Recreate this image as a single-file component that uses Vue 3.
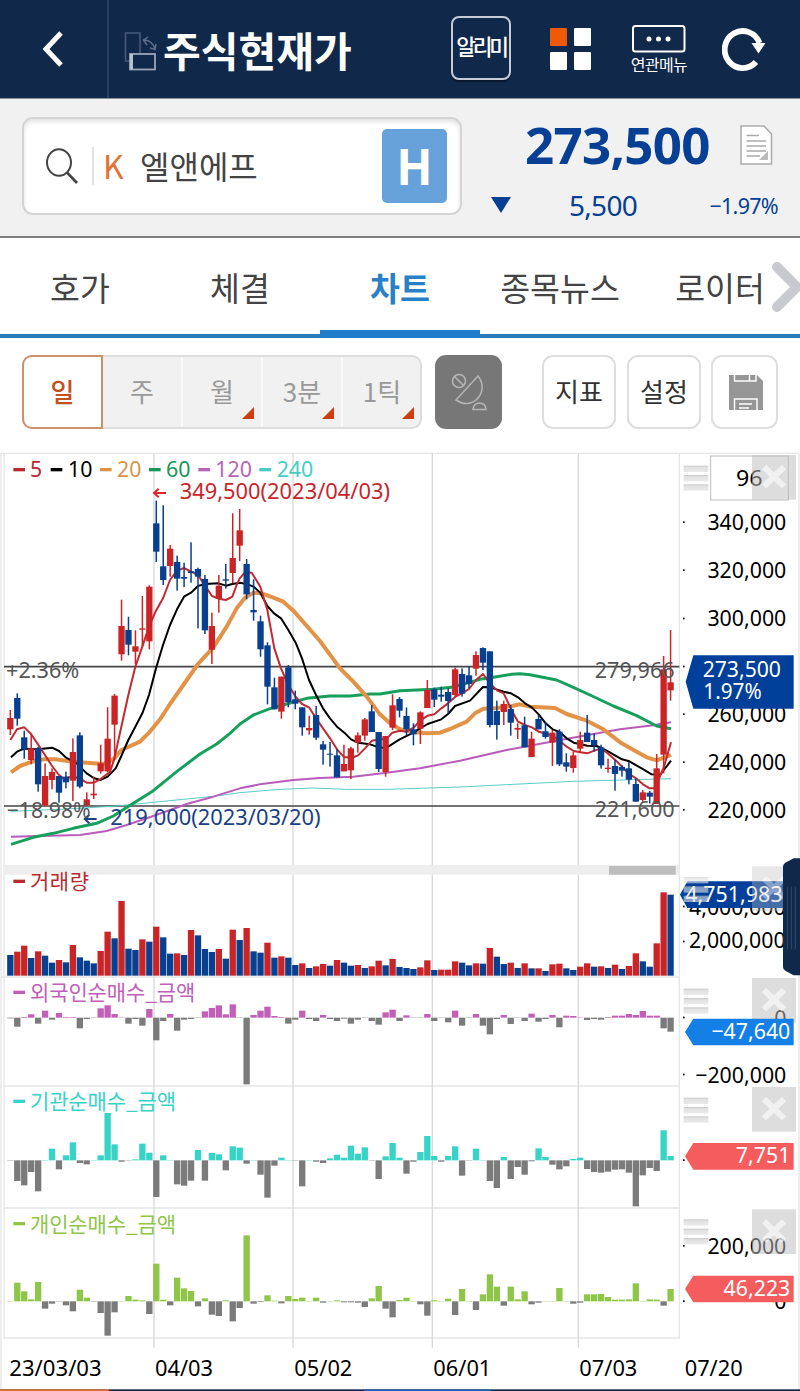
<template>
  <div class="app">
    <header class="top-bar">
      <button class="back">
        <svg width="24" height="38" viewBox="0 0 24 38"><path d="M20 3 L5 19 L20 35" fill="none" stroke="#fff" stroke-width="5" /></svg>
      </button>
      <svg class="rotate-icon" width="34" height="42" viewBox="0 0 34 42" fill="none">
        <path d="M5 30 H1.5 V2 H16 V22" stroke="#46597a" stroke-width="1.6" />
        <path d="M20 9 C25 9 29 12 31 18 M24 6 L19.500 9 L23 14 M32 13 L31 18.500 L26 17" stroke="#5d6d8a" stroke-width="1.5" />
        <rect x="6" y="23" width="25" height="15.500" stroke="#9aa6ba" stroke-width="1.800" />
        <path d="M7.500 23 V38.500" stroke="#b8c0ce" stroke-width="3" />
      </svg>
      <h1>주식현재가</h1>
      <button class="notice">알리미</button>
      <div class="tiles"><i class="on"></i><i></i><i></i><i></i></div>
      <div class="related">
        <svg width="54" height="28" viewBox="0 0 54 28">
          <rect x="1" y="1" width="51.500" height="25.500" rx="2.500" fill="none" stroke="#fff" stroke-width="2" />
          <circle cx="17" cy="14" r="2.500" fill="#fff" /><circle cx="26.500" cy="14" r="2.500" fill="#fff" /><circle cx="36" cy="14" r="2.500" fill="#fff" />
        </svg>
        <span>연관메뉴</span>
      </div>
      <svg class="refresh" width="44" height="46" viewBox="0 0 44 46">
        <path d="M34 36 A18 18.500 0 1 1 37.500 17" fill="none" stroke="#fff" stroke-width="5.800" />
        <path d="M29.500 17 L43.500 17 L36.500 27.500 Z" fill="#fff" />
      </svg>
    </header>

    <section class="quote">
      <div class="search">
        <svg class="glass" width="34" height="38" viewBox="0 0 34 38" fill="none" stroke="#444">
          <ellipse cx="14" cy="15.500" rx="12" ry="13.300" stroke-width="2" />
          <path d="M22 25.500 L32 36" stroke-width="2.600" />
        </svg>
        <span class="market">K</span>
        <span class="name">엘앤에프</span>
        <span class="h-badge">H</span>
      </div>
      <div class="price-box">
        <div class="price-row">
          <strong>273,500</strong>
          <svg width="33" height="41" viewBox="0 0 33 41">
            <path d="M1 1 H24 L31.500 9 V39 H1 Z" fill="#fff" stroke="#aaa" stroke-width="1.500" />
            <path d="M6.500 10.500 H19 M6.500 16 H26 M6.500 21 H26 M6.500 26 H26 M6.500 31 H20" stroke="#aaa" stroke-width="1.500" />
            <path d="M28 26 V35 H19 Z" fill="#bbb" />
          </svg>
        </div>
        <div class="diff-row">
          <svg width="20" height="16" viewBox="0 0 20 16"><path d="M0 0 H20 L10 16 Z" fill="#063f94" /></svg>
          <span class="diff">5,500</span>
          <span class="rate">−1.97%</span>
        </div>
      </div>
    </section>

    <nav class="tabs">
      <a v-for="tab in tabs" :key="tab" :class="{ active: tab === activeTab }">{{ tab }}</a>
      <svg class="more" width="30" height="52" viewBox="0 0 30 52"><path d="M6 6 L26 26 L6 46" fill="none" stroke="#c9cacf" stroke-width="10" stroke-linecap="round" stroke-linejoin="round" /></svg>
    </nav>

    <div class="toolbar">
      <div class="periods">
        <button v-for="p in periods" :key="p.label" :class="{ selected: p.selected }">
          {{ p.label }}
          <i v-if="p.more"></i>
        </button>
      </div>
      <button class="dish">
        <svg width="36" height="38" viewBox="0 0 36 38" fill="none" stroke="#b4b4b4" stroke-width="1.600">
          <circle cx="8" cy="8" r="6.500" /><path d="M3.500 3.500 L12.500 12.500" />
          <path d="M27 3 L5 27 C12 32 21 32 27 25 C33 18 32 9 27 3 Z" />
          <path d="M22 36.500 C22 28 35 28 35 36.500 Z" />
        </svg>
      </button>
      <button class="tool indicator">지표</button>
      <button class="tool config">설정</button>
      <button class="tool save">
        <svg width="34" height="35" viewBox="0 0 34 35">
          <path d="M0 0 H28 L34 6 V35 H0 Z" fill="#969696" />
          <path d="M5.500 0 V6 H27 V0 M20.500 0 V6 M5.500 35 V24 H28 V35 M10 29 H23 M10 33 H20" fill="none" stroke="#fff" stroke-width="1.400" />
        </svg>
      </button>
    </div>

    <main class="chart">
      <!-- price -->
      <svg class="pane" width="800" height="415" viewBox="0 0 2400 1245">
        <path class="frame" d="M3 1245 V10 H2397 V1245 M12 10 V1245 M2038 10 V1245" />
        <path class="grid" :d="gridPath(10, 1245)" />
        <g v-for="m in legend" :key="m.label" :fill="m.color">
          <rect :x="m.x" y="54" width="35" height="10" />
          <text :x="m.tx" y="80">{{ m.label }}</text>
        </g>
        <path class="level" d="M12 650 H2038 M12 1068 H2038" />
        <g class="ma">
          <polyline v-for="l in averages" :key="l.color" :points="l.points" :stroke="l.color" :stroke-width="l.width" />
        </g>
        <g v-for="(c, i) in candles" :key="i" :fill="c[0] ? RED : BLUE">
          <rect :x="barX(i) - 2.250" :y="c[1]" width="4.500" :height="c[4] - c[1]" />
          <rect :x="barX(i) - 9.500" :y="c[2]" width="19" :height="c[3] - c[2]" />
        </g>
        <g fill="#c9252b">
          <path d="M476 116 L462 129 L476 142 M462 129 H498" fill="none" stroke="#e0252b" stroke-width="6" />
          <text x="539" y="146" textLength="631" lengthAdjust="spacingAndGlyphs">349,500(2023/04/03)</text>
        </g>
        <g fill="#1a4088">
          <path d="M268 1094 L254 1107 L268 1120 M254 1107 H290" fill="none" stroke="#1a4088" stroke-width="6" />
          <text x="331" y="1124" textLength="631" lengthAdjust="spacingAndGlyphs">219,000(2023/03/20)</text>
        </g>
        <g fill="#555">
          <text x="18" y="684" textLength="220" lengthAdjust="spacingAndGlyphs">+2.36%</text>
          <text x="20" y="1103" textLength="252" lengthAdjust="spacingAndGlyphs">−18.98%</text>
          <text x="1784" y="684" textLength="240" lengthAdjust="spacingAndGlyphs">279,966</text>
          <text x="1784" y="1102" textLength="240" lengthAdjust="spacingAndGlyphs">221,600</text>
        </g>
        <g v-for="a in priceAxis" :key="a.y">
          <rect x="2049" :y="a.y - 3" width="5" height="5" />
          <text v-if="a.label" x="2359" :y="a.y + 23" text-anchor="end">{{ a.label }}</text>
        </g>
        <path d="M2057 695 L2080 616 H2381 V776 H2080 Z" fill="#00409a" />
        <text x="2108" y="680" fill="#fff" textLength="235" lengthAdjust="spacingAndGlyphs">273,500</text>
        <text x="2110" y="748" fill="#fff" textLength="175" lengthAdjust="spacingAndGlyphs">1.97%</text>
        <rect x="2132" y="18" width="233" height="132" fill="#fff" stroke="#bbb" stroke-width="3" />
        <text x="2208" y="109" textLength="80" lengthAdjust="spacingAndGlyphs">96</text>
        <use href="#grip" y="47" />
        <use href="#close" y="15" />
      </svg>

      <!-- volume -->
      <svg class="pane volume" width="800" height="112" viewBox="0 45 2400 336">
        <path class="frame" d="M3 45 V381 H2038 M12 45 V381 M2038 45 V381 M2397 45 V381" />
        <path class="grid" :d="gridPath(74, 381)" />
        <rect x="12" y="45" width="2026" height="29" fill="#eee" />
        <rect x="1827" y="48" width="200" height="26" fill="#bdbdbd" />
        <rect x="40" y="89" width="35" height="10" fill="#b92a2e" />
        <text class="ko" x="90" y="117" fill="#b92a2e" textLength="177">거래량</text>
        <rect v-for="(v, i) in volumes" :key="i" :x="barX(i) - 9.500" :y="Math.abs(v)" width="19" :height="377 - Math.abs(v)" :fill="v > 0 ? RED : BLUE" />
        <rect x="2049" y="167" width="5" height="5" /><rect x="2049" y="272" width="5" height="5" />
        <text x="2357" y="195" text-anchor="end" textLength="290" lengthAdjust="spacingAndGlyphs">4,000,000</text>
        <text x="2357" y="295" text-anchor="end" textLength="290" lengthAdjust="spacingAndGlyphs">2,000,000</text>
        <path d="M2040 134 L2062 94 H2381 V174 H2062 Z" fill="#00409a" />
        <text x="2056" y="157" fill="#fff" textLength="292" lengthAdjust="spacingAndGlyphs">4,751,983</text>
        <use href="#grip" y="81" opacity=".6" />
        <use href="#close" y="49" opacity=".7" />
        <path d="M2400 25 H2381 L2356 38 Q2349 42 2349 50 V350 Q2349 358 2356 362 L2381 376 H2400 Z" fill="#10284a" />
        <path d="M2362 110 V298 M2374 110 V298 M2386 110 V298" stroke="#34496a" stroke-width="3" />
      </svg>

      <!-- net buying, one pane for each investor group -->
      <svg v-for="p in flows" :key="p.title" class="pane" width="800" :height="p.height / 3" :viewBox="`0 ${p.top} 2400 ${p.height}`">
        <path class="frame" :d="`M3 ${p.top} v${p.height} M2397 ${p.top} v${p.height} M12 ${p.top} v${p.height} H2038 v${-p.height}`" />
        <path class="grid" :d="gridPath(p.top, p.top + p.height)" />
        <rect x="40" :y="p.titleY - 29" width="35" height="10" :fill="p.color" />
        <text class="ko" x="90" :y="p.titleY" :fill="p.color" :textLength="p.titleWidth">{{ p.title }}</text>
        <rect v-for="(v, i) in p.values" :key="i" :x="barX(i) - 9.500" :y="v > 0 ? p.base - v : p.base" width="19" :height="Math.abs(v)" :fill="v > 0 ? p.color : '#7b7b7b'" />
        <g v-for="a in p.axis" :key="a.y">
          <rect x="2049" :y="a.y - 3" width="5" height="5" />
          <text v-if="a.label" x="2359" :y="a.y + 24" text-anchor="end">{{ a.label }}</text>
        </g>
        <use href="#grip" :y="p.gripY" />
        <use href="#close" :y="p.closeY" />
        <path :d="`M2055 ${p.tagY + 40} l25 -40 H2381 v80 H2080 Z`" :fill="p.tagColor" />
        <text x="2371" :y="p.tagY + 61" fill="#fff" text-anchor="end">{{ p.tag }}</text>
      </svg>

      <!-- dates -->
      <svg class="pane" width="800" height="53" viewBox="0 744 2400 159">
        <path class="frame" d="M3 744 V900 M2397 744 V900" />
        <path class="grid" :d="gridPath(744, 773)" />
        <text v-for="d in dates" :key="d.x" :x="d.x" y="859" :textLength="d.width" lengthAdjust="spacingAndGlyphs">{{ d.label }}</text>
        <rect x="0" y="898" width="2400" height="5" fill="#10284a" />
        <rect x="0" y="898" width="327" height="5" fill="#e07038" />
        <rect x="1092" y="898" width="380" height="5" fill="#1f66b8" />
      </svg>

      <svg width="0" height="0" class="defs">
        <defs>
          <linearGradient id="bar" x1="0" y1="0" x2="0" y2="1">
            <stop offset="0" stop-color="#c8c8c8" /><stop offset=".3" stop-color="#e2e2e2" /><stop offset="1" stop-color="#e9e9e9" />
          </linearGradient>
          <g id="grip" fill="url(#bar)">
            <rect x="2051" width="74" height="19" /><rect x="2051" y="28" width="74" height="19" /><rect x="2051" y="56" width="74" height="19" />
          </g>
          <g id="close">
            <rect x="2256" width="132" height="134" fill="#bdbdbd" fill-opacity=".52" />
            <path d="M2292 36 L2352 94 M2352 36 L2292 94" stroke="#fff" stroke-opacity=".6" stroke-width="18" />
          </g>
        </defs>
      </svg>
    </main>
  </div>
</template>

<script setup>
import { ref } from 'vue'

const RED = '#cb2427'
const BLUE = '#083f8e'

const tabs = ['호가', '체결', '차트', '종목뉴스', '로이터']
const activeTab = ref('차트')

const periods = [
  { label: '일', selected: true },
  { label: '주' },
  { label: '월', more: true },
  { label: '3분', more: true },
  { label: '1틱', more: true },
]

// Panes are drawn on a canvas three units to the pixel
const barX = (i) => 31 + i * 20.85
const gridPath = (y1, y2) => [462, 879, 1297, 1735].map((x) => `M${x} ${y1} V${y2}`).join(' ')

const legend = [
  { label: '5', color: '#b92a2e', x: 40, tx: 90 },
  { label: '10', color: '#000', x: 152, tx: 204 },
  { label: '20', color: '#dd924a', x: 300, tx: 351 },
  { label: '60', color: '#14995a', x: 447, tx: 498 },
  { label: '120', color: '#b765b9', x: 595, tx: 646 },
  { label: '240', color: '#45cdc5', x: 778, tx: 830 },
]

const averages = [
  { color: '#5cccc9', width: 3, points: '33,1084 200,1077 350,1068 450,1058 560,1047 650,1038 720,1028 840,1018 940,1014 1040,1018 1160,1018 1380,1011 1520,1004 1720,994 2013,986' },
  { color: '#b85bbb', width: 6, points: '33,1160 150,1157 240,1155 320,1143 380,1125 460,1098 560,1062 640,1040 720,1015 780,1003 880,990 960,984 1060,980 1160,968 1260,955 1380,932 1520,900 1710,865 1860,838 1960,826 2013,817' },
  { color: '#17a05c', width: 9, points: '33,1183 100,1162 160,1150 220,1135 290,1120 340,1098 400,1060 460,1022 530,965 600,912 650,882 690,850 720,822 760,795 810,776 860,762 920,745 990,738 1050,738 1110,732 1140,732 1200,722 1300,718 1360,711 1440,688 1490,680 1535,673 1560,671 1590,674 1670,690 1720,712 1770,735 1840,768 1910,797 1970,828 2013,836' },
  { color: '#e39347', width: 12, points: '33,967 60,948 90,937 130,928 165,928 210,934 260,938 310,942 340,928 364,900 420,875 447,848 480,808 510,762 550,705 594,642 640,592 680,530 710,475 735,443 760,428 785,430 820,443 850,455 880,482 960,573 1020,655 1060,695 1100,740 1140,793 1170,820 1200,838 1240,846 1280,850 1320,848 1350,837 1400,815 1425,790 1450,776 1490,774 1535,768 1560,763 1590,770 1665,774 1700,792 1760,812 1810,838 1865,880 1910,905 1940,922 1970,931 2013,915' },
  { color: '#000', width: 6, points: '33,922 51,905 73,896 114,898 156,893 177,903 197,922 230,940 260,970 281,984 301,990 323,980 347,955 364,918 385,870 406,830 427,790 447,735 468,655 489,585 510,525 531,478 552,440 573,428 594,408 615,402 656,400 678,407 697,402 720,398 739,402 761,410 781,428 802,468 822,490 843,505 865,540 887,578 906,625 927,690 948,735 969,775 990,805 1011,830 1033,848 1053,868 1074,878 1110,883 1140,893 1160,893 1199,868 1240,848 1260,835 1283,822 1324,808 1344,792 1365,768 1410,752 1449,711 1470,712 1511,725 1533,730 1554,742 1575,760 1596,773 1616,793 1637,820 1658,838 1679,846 1700,865 1721,878 1762,887 1790,888 1820,902 1866,928 1888,934 1925,955 1955,973 1980,975 2013,932' },
  { color: '#c02b30', width: 6, points: '31,870 51,838 73,832 93,852 114,883 135,915 156,948 177,975 190,985 217,980 239,985 260,998 281,998 301,988 330,965 342,930 364,830 385,735 406,650 427,590 447,530 468,482 489,445 510,390 531,362 552,354 573,365 594,375 615,407 636,438 656,446 678,450 697,440 710,405 719,385 735,367 755,368 781,410 802,480 823,595 843,655 865,705 887,740 906,762 927,772 948,805 969,835 990,865 1011,898 1033,922 1060,922 1074,916 1095,895 1116,872 1140,868 1158,868 1177,848 1199,842 1220,845 1242,832 1260,812 1283,797 1303,793 1324,775 1344,760 1366,740 1386,730 1407,717 1428,690 1449,672 1470,700 1492,722 1511,730 1533,777 1554,815 1575,825 1596,832 1616,845 1637,850 1658,858 1679,872 1700,890 1721,903 1741,907 1762,910 1783,902 1804,895 1825,912 1846,930 1866,950 1888,972 1908,985 1929,1003 1949,1015 1965,1015 1992,950 2013,877' },
]

// [rising, high, body top, body bottom, low]
const candles = [
  [1, 780, 804, 838, 855], [0, 730, 744, 806, 827], [0, 842, 862, 898, 926], [1, 853, 895, 930, 943],
  [0, 890, 895, 1003, 1025], [1, 940, 978, 1066, 1068], [1, 955, 966, 990, 1018], [0, 978, 978, 1028, 1058],
  [0, 965, 980, 997, 1015], [1, 865, 906, 992, 1053], [0, 847, 856, 1010, 1015], [1, 1027, 1048, 1066, 1068],
  [1, 980, 1031, 1036, 1047], [1, 884, 940, 964, 971], [1, 772, 866, 964, 967], [1, 732, 737, 824, 930],
  [1, 449, 528, 613, 632], [0, 500, 540, 584, 616], [1, 541, 589, 605, 642], [1, 438, 535, 539, 590],
  [1, 406, 410, 574, 598], [0, 152, 220, 305, 336], [0, 166, 349, 390, 405], [1, 285, 296, 348, 380],
  [0, 317, 336, 386, 422], [0, 338, 381, 386, 411], [0, 277, 364, 369, 398], [0, 353, 357, 380, 535],
  [0, 375, 387, 541, 552], [1, 488, 528, 599, 642], [1, 375, 407, 446, 488], [0, 342, 388, 392, 416],
  [1, 190, 324, 369, 400], [1, 177, 241, 287, 333], [0, 327, 342, 433, 448], [0, 388, 480, 487, 512],
  [0, 497, 514, 598, 620], [0, 577, 586, 710, 763], [0, 683, 712, 778, 778], [1, 680, 680, 785, 806],
  [0, 645, 652, 757, 772], [0, 722, 748, 761, 778], [0, 772, 772, 832, 857], [1, 797, 834, 841, 854],
  [0, 768, 795, 863, 870], [0, 873, 883, 899, 944], [0, 876, 911, 914, 950], [0, 898, 916, 982, 982],
  [1, 884, 942, 964, 964], [1, 890, 895, 961, 987], [1, 847, 856, 878, 908], [1, 804, 808, 857, 872],
  [0, 765, 784, 846, 846], [0, 846, 846, 957, 966], [1, 858, 858, 966, 980], [1, 733, 766, 833, 840],
  [0, 741, 747, 782, 802], [0, 772, 798, 838, 855], [0, 820, 838, 853, 886], [1, 784, 787, 836, 882],
  [1, 690, 720, 774, 774], [0, 713, 718, 749, 771], [0, 710, 734, 740, 755], [0, 715, 726, 753, 790],
  [1, 652, 658, 735, 740], [0, 655, 672, 731, 740], [0, 650, 676, 702, 715], [1, 604, 615, 656, 677],
  [0, 592, 594, 638, 660], [0, 604, 604, 825, 832], [0, 752, 783, 825, 869], [1, 752, 762, 786, 825],
  [0, 765, 777, 818, 857], [1, 820, 834, 839, 867], [0, 800, 826, 892, 892], [1, 845, 866, 921, 921],
  [0, 795, 807, 838, 838], [0, 817, 844, 861, 866], [1, 840, 848, 878, 948], [0, 838, 845, 943, 948],
  [0, 910, 937, 950, 965], [1, 905, 916, 954, 968], [1, 845, 870, 896, 908], [0, 795, 848, 876, 876],
  [0, 850, 870, 886, 905], [0, 884, 892, 946, 956], [1, 926, 953, 957, 968], [0, 930, 948, 972, 1022],
  [0, 945, 951, 962, 980], [0, 936, 955, 989, 1003], [0, 985, 1002, 1055, 1055], [1, 1020, 1027, 1050, 1055],
  [0, 1023, 1028, 1040, 1060], [1, 912, 955, 1062, 1062], [1, 618, 658, 914, 970], [1, 540, 697, 721, 752],
]

// Top edge of each bar, negative on falling days
const volumes = [
  -315, 305, 287, -324, 304, -317, -338, 330, -337, 285, -322, -332, -340, 303, 245, -265,
  153, -296, -300, 268, -275, 230, -262, -311, 310, -315, 240, -256, -297, -306, 297, -326,
  239, -270, 234, -304, -308, 278, -323, 319, -323, -345, 340, -354, 349, 342, -347, 330,
  -338, -347, 345, -354, 349, 332, -346, 327, -351, -354, -357, 352, 331, -360, 359, 359,
  334, -338, -346, 340, -341, 294, -320, -342, 338, -354, 340, -355, 355, -363, 343, 341,
  -355, -360, 350, 340, -350, 349, -354, 344, -357, 348, 310, -334, -350, 280, 127, -134,
]

const foreign = [
  -2, -27, 2, 10, -18, 21, -6, 14, 2, 2, -32, -4, -1, 28, 37, 11,
  1, -18, -4, -24, 26, -68, -10, 11, -39, -6, -4, -1, 19, 29, 37, 10,
  40, -1, -200, 8, 21, 33, 5, 2, -18, -6, 21, -4, -10, 8, -4, -10,
  -3, -18, -6, -1, -10, -21, 16, 24, -10, 7, -1, -1, 11, -10, -1, -14,
  21, -24, -1, 11, -24, -50, -4, 8, -19, 1, -10, 12, -12, -4, 8, -29,
  6, 5, 1, -7, -4, -6, 2, 6, 6, 11, 8, 20, 6, 6, -32, -42,
]

const institution = [
  -1, -62, -75, -35, -93, 1, 35, -27, 15, 54, -8, -12, 1, 15, 142, 48,
  -4, -1, 3, 50, 23, -110, 15, 1, -72, -76, -61, 31, -61, 22, 18, -30,
  42, 38, -10, 1, -43, -112, -16, 8, 1, -1, -78, 1, -4, -8, 6, 17,
  8, 44, 20, 39, -1, -56, 12, 52, 8, -40, -4, 25, 73, 13, -4, 13,
  42, -46, -1, 35, 1, -62, -83, 10, -56, -20, -43, -3, 36, 10, -13, -27,
  -18, 4, 8, -26, -35, -37, -34, -28, -27, -37, -138, -45, -23, -32, 90, 13,
]

const individual = [
  1, 56, 30, 6, 58, -22, -7, -1, -12, -30, 35, 11, -1, -35, -103, -33,
  1, 16, 5, 3, -38, 113, 5, -12, 71, 39, 31, -15, 9, -40, -44, 3,
  -60, -20, 198, -7, -2, 18, 2, -6, 16, 7, 11, 1, 11, -4, 1, 3,
  -3, -3, -4, -17, 9, 46, -22, -48, 4, 11, 1, -9, -43, 3, 1, 8,
  -41, 37, 1, -26, 21, 81, 44, -13, 44, 6, 30, -9, -4, 1, 1, 40,
  1, -7, -4, 21, 21, 22, 13, 5, 5, 6, 54, 1, 6, 5, -13, 37,
]

const priceAxis = [
  { y: 217, label: '340,000' },
  { y: 361, label: '320,000' },
  { y: 506, label: '300,000' },
  { y: 650 },
  { y: 793, label: '260,000' },
  { y: 937, label: '240,000' },
  { y: 1080, label: '220,000' },
]

const flows = [
  {
    title: '외국인순매수_금액', color: '#c25fb8', top: 381, height: 327, base: 503, values: foreign,
    titleY: 451, titleWidth: 496, gripY: 416, closeY: 384, tag: '−47,640', tagY: 506, tagColor: '#147fe6',
    axis: [{ y: 503, label: '0' }, { y: 674, label: '−200,000' }],
  },
  {
    title: '기관순매수_금액', color: '#38d3c7', top: -12, height: 366, base: 211, values: institution,
    titleY: 58, titleWidth: 438, gripY: 23, closeY: -9, tag: '7,751', tagY: 159, tagColor: '#f55c5e',
    axis: [{ y: 211 }],
  },
  {
    title: '개인순매수_금액', color: '#8fc549', top: 354, height: 390, base: 634, values: individual,
    titleY: 425, titleWidth: 438, gripY: 388, closeY: 358, tag: '46,223', tagY: 557, tagColor: '#f55c5e',
    axis: [{ y: 468, label: '200,000' }, { y: 634, label: '0' }],
  },
]

const dates = [
  { label: '23/03/03', x: 28, width: 277 },
  { label: '04/03', x: 465, width: 174 },
  { label: '05/02', x: 883, width: 174 },
  { label: '06/01', x: 1300, width: 174 },
  { label: '07/03', x: 1738, width: 174 },
  { label: '07/20', x: 2054, width: 174 },
]
</script>

<style>
body {
  margin: 0;
  background: #fff;
}
</style>

<style scoped>
.app {
  width: 800px;
  height: 1391px;
  overflow: hidden;
  font-family: "Noto Sans", "Noto Sans CJK KR", sans-serif;
  background: #fff;
}
svg {
  display: block;
  flex: none;
}
button {
  padding: 0;
  border: 0;
  background: none;
  box-sizing: border-box;
  font-family: "Noto Sans CJK KR", sans-serif;
}
.top-bar {
  display: flex;
  align-items: center;
  height: 99px;
  background: #10284a;
  border-bottom: 1px solid #8d939e;
  box-sizing: border-box;
}
.back {
  width: 109px;
  height: 98px;
  display: flex;
  align-items: center;
  padding-left: 41px;
  border-right: 2px solid #2b4164;
}
.rotate-icon {
  margin: 6px 0 0 15px;
}
h1 {
  margin: 0 0 0 5px;
  width: 288px;
  font: bold 41px/60px "Noto Sans CJK KR", sans-serif;
  color: #fff;
  white-space: nowrap;
}
.notice {
  width: 60px;
  height: 64px;
  margin-top: -2px;
  border: 2px solid #c6ccd6;
  border-radius: 8px;
  box-shadow: 0 2px 1px #081830;
  color: #fff;
  font-size: 21.500px;
  font-weight: 500;
  letter-spacing: -3.200px;
  line-height: 56px;
  padding-bottom: 4px;
  white-space: nowrap;
}
.tiles {
  display: grid;
  grid-template-columns: 17px 17px;
  gap: 6px 7px;
  margin-left: 39px;
}
.tiles i {
  height: 18px;
  background: #fff;
  border-radius: 1px;
}
.tiles .on {
  background: #ee5a06;
}
.related {
  display: flex;
  flex-direction: column;
  align-items: center;
  width: 60px;
  margin: 1px 0 0 38px;
  color: #fff;
}
.related span {
  font: 16px/20px "Noto Sans CJK KR", sans-serif;
  letter-spacing: -0.600px;
  margin-top: 1px;
}
.refresh {
  margin: -1px 0 0 33px;
}
.quote {
  display: flex;
  height: 139px;
  box-sizing: border-box;
  background: #f1f1f1;
  border-bottom: 2px solid #808080;
}
.search {
  display: flex;
  align-items: center;
  width: 440px;
  height: 98px;
  margin: 18px 0 0 22px;
  box-sizing: border-box;
  border: 2px solid #d4d4d4;
  border-radius: 11px;
  background: #fff;
  box-shadow: inset 0 3px 4px #e4e4e4;
}
.glass {
  margin-left: 21px;
}
.market {
  flex: none;
  margin-left: 13px;
  padding-left: 9px;
  width: 37px;
  height: 38px;
  border-left: 2px solid #e2e2e2;
  color: #e27336;
  font: 32px/36px "Noto Sans CJK KR", sans-serif;
}
.name {
  width: 242px;
  font: 32px/48px "Noto Sans CJK KR", sans-serif;
  margin-top: -3px;
  color: #444;
}
.h-badge {
  flex: none;
  width: 65px;
  height: 74px;
  border-radius: 5px;
  background: #66a1da;
  color: #fff;
  font: bold 48px/70px "Noto Sans CJK KR", sans-serif;
  text-align: center;
}
.price-box {
  margin-left: 29px;
  width: 287px;
  color: #063f94;
}
.price-row {
  display: flex;
  align-items: center;
  height: 76px;
  margin-top: 8px;
}
.price-row strong {
  width: 249px;
  padding-left: 34px;
  margin-top: -2px;
  box-sizing: border-box;
  font-size: 51px;
  font-weight: 700;
  letter-spacing: -0.700px;
}
.diff-row {
  display: flex;
  align-items: center;
  height: 42px;
  margin-top: 1px;
}
.diff {
  width: 140px;
  padding-left: 58px;
  box-sizing: border-box;
  font-size: 28px;
  letter-spacing: -0.700px;
}
.rate {
  flex: 1;
  text-align: right;
  font-size: 21.500px;
  letter-spacing: -0.700px;
  white-space: nowrap;
}
.tabs {
  position: relative;
  display: flex;
  height: 100px;
  box-sizing: border-box;
  border-bottom: 4px solid #2b7cb9;
}
.tabs a {
  width: 160px;
  height: 100px;
  box-sizing: border-box;
  text-align: center;
  font: 32.500px/97px "Noto Sans CJK KR", sans-serif;
  color: #444;
}
.tabs .active {
  border-bottom: 8px solid #1f7ccb;
  font-weight: 700;
  color: #2a80c6;
}
.more {
  position: absolute;
  right: -1px;
  top: 23px;
}
.toolbar {
  display: flex;
  height: 112px;
  padding: 17px 0 0 22px;
  box-sizing: border-box;
}
.periods {
  display: flex;
  width: 400px;
  height: 74px;
  box-sizing: border-box;
  border: 2px solid #ddd;
  border-radius: 10px;
  background: #f1f1f1;
}
.periods button {
  position: relative;
  flex: none;
  width: 80px;
  padding-bottom: 3px;
  color: #999;
  font-size: 26px;
  border-right: 2px solid #fafafa;
}
.periods button:last-child {
  width: 78px;
  border: 0;
}
.periods .selected {
  width: 81px;
  margin: -2px 0 -2px -2px;
  border: 2px solid #cf8f6d;
  border-radius: 10px 0 0 10px;
  background: #fff;
  color: #c2511f;
  font-weight: 500;
}
.periods i {
  position: absolute;
  right: 7px;
  bottom: 8px;
  border-left: 12px solid transparent;
  border-bottom: 12px solid #cc400f;
}
.dish {
  display: flex;
  align-items: center;
  justify-content: center;
  width: 67px;
  height: 74px;
  margin-left: 13px;
  border-radius: 11px;
  background: #777;
}
.tool {
  display: flex;
  align-items: center;
  justify-content: center;
  width: 74px;
  height: 74px;
  padding-bottom: 3px;
  border: 2px solid #dedede;
  border-radius: 11px;
  font-size: 26px;
  color: #333;
}
.indicator {
  margin-left: 40px;
}
.config {
  margin-left: 11px;
}
.save {
  width: 67px;
  margin-left: 10px;
  padding: 0 0 0 2px;
}
.pane {
  overflow: visible;
}
.volume {
  position: relative;
  z-index: 1;
}
.pane text {
  font-family: "Noto Sans", sans-serif;
  font-size: 64px;
}
.pane .ko {
  font-family: "Noto Sans CJK KR", sans-serif;
  font-size: 63px;
}
.frame {
  fill: none;
  stroke: #e6e6e6;
  stroke-width: 4px;
}
.grid {
  stroke: #d9d9d9;
  stroke-width: 4px;
}
.level {
  stroke: #444;
  stroke-width: 5px;
}
.ma {
  fill: none;
  stroke-linejoin: round;
}
</style>
